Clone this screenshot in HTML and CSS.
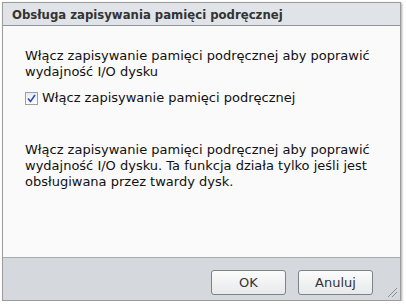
FILE: index.html
```html
<!DOCTYPE html>
<html lang="pl">
<head>
    <meta charset="UTF-8">
    <title>Obsługa zapisywania pamięci podręcznej</title>
    <link rel="stylesheet" href="styles.css">
</head>
<body>
    <div class="dialog">
        <div class="header">Obsługa zapisywania pamięci podręcznej</div>
        <div class="content">
            <p class="intro">Włącz zapisywanie pamięci podręcznej aby poprawić wydajność I/O dysku</p>
            <label class="check">
                <span class="box">
                    <svg width="9" height="9" viewBox="0 0 9 9"><path d="M1 4.5 L3.5 7.5 L8 1" fill="none" stroke="#2b4fb5" stroke-width="1.6"/></svg>
                </span>
                Włącz zapisywanie pamięci podręcznej
            </label>
            <p class="note">Włącz zapisywanie pamięci podręcznej aby poprawić wydajność I/O dysku. Ta funkcja działa tylko jeśli jest obsługiwana przez twardy dysk.</p>
        </div>
        <div class="footer">
            <button class="btn">OK</button>
            <button class="btn">Anuluj</button>
            <span class="grip"></span>
        </div>
    </div>
</body>
</html>
```
FILE: styles.css
```css
body {
    margin: 0;
    background: #ffffff;
    font-family: "DejaVu Sans", Verdana, sans-serif;
}
.dialog {
    margin: 2px 3px 0 2px;
    width: 399px;
    height: 299px;
    border: 1px solid #9c9c9c;
    box-shadow: 1px 1px 2px rgba(0, 0, 0, 0.35);
    box-sizing: border-box;
    display: flex;
    flex-direction: column;
    background: #d5d9dd;
}
.header {
    height: 23px;
    box-sizing: border-box;
    padding: 5px 0 0 9px;
    background: #e0e4e8;
    border-bottom: 1px solid #8f959b;
    font-size: 11.7px;
    font-weight: bold;
    color: #333333;
}
.content {
    height: 232px;
    box-sizing: border-box;
    background: #fafafa;
    border-bottom: 1px solid #a6abb0;
    padding: 22px 0 0 22px;
    font-size: 13px;
    color: #111111;
    line-height: 16px;
}
.intro {
    margin: 0;
    width: 350px;
}
.check {
    display: flex;
    align-items: center;
    gap: 4px;
    margin-top: 10px;
}
.box {
    width: 11px;
    height: 11px;
    border: 1px solid #9aa0a6;
    background: linear-gradient(#e8ebee, #ffffff);
    display: flex;
    align-items: center;
    justify-content: center;
}
.note {
    margin: 36px 0 0 0;
    width: 360px;
}
.footer {
    flex: 1;
    display: flex;
    justify-content: flex-end;
    align-items: flex-start;
    gap: 12px;
    padding: 12px 27px 0 0;
    position: relative;
}
.btn {
    width: 75px;
    height: 25px;
    border: 1px solid #7e8388;
    border-radius: 3px;
    background: linear-gradient(#fbfbfb, #e7e9eb);
    font-family: "DejaVu Sans", Verdana, sans-serif;
    font-size: 13px;
    color: #333333;
}
.grip {
    position: absolute;
    right: 3px;
    bottom: 3px;
    width: 9px;
    height: 9px;
    background: linear-gradient(135deg, transparent 45%, #8a8f94 45%, #8a8f94 53%, transparent 53%, transparent 68%, #8a8f94 68%, #8a8f94 76%, transparent 76%);
}
```
